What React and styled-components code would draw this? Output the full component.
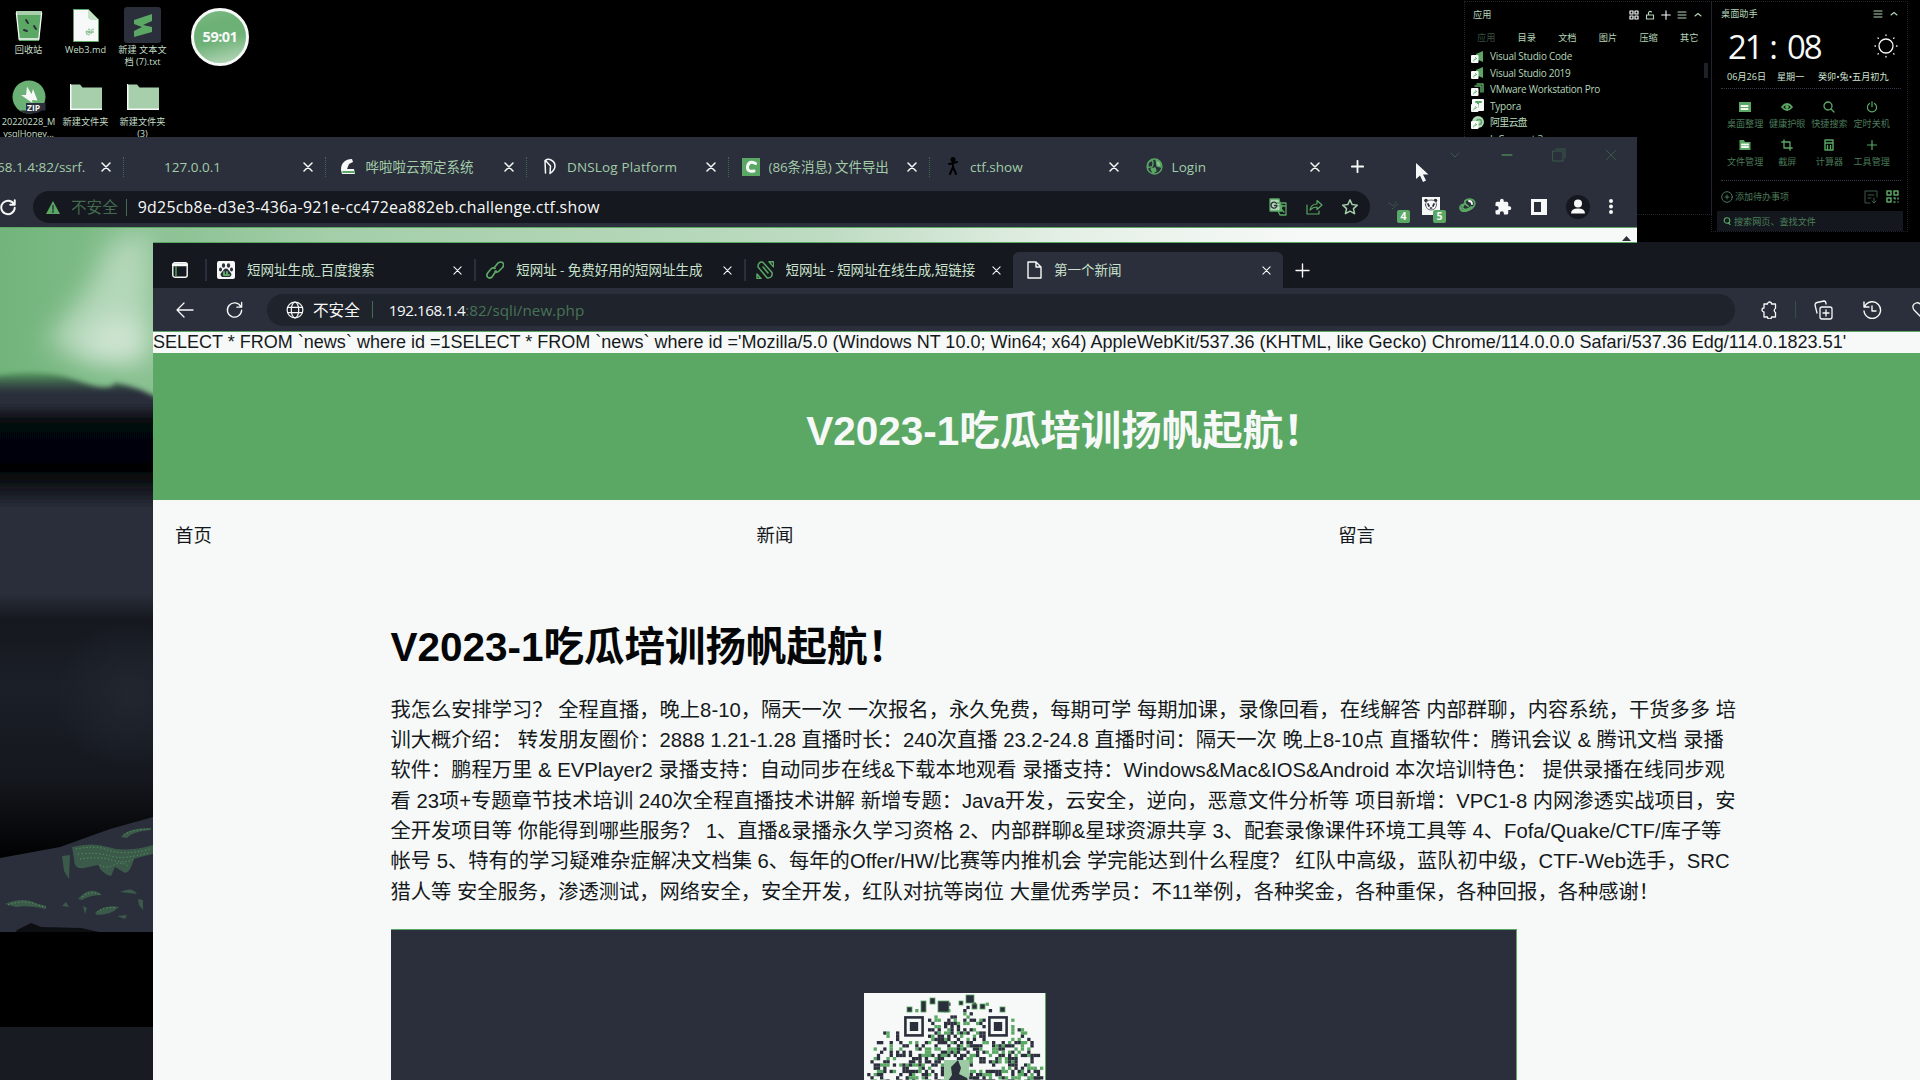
import React from "react";
import styled, { createGlobalStyle } from "styled-components";

const C = {
  ink: "#2a2f3b",
  deep: "#15181e",
  field: "#1f232c",
  green: "#5aa864",
  white: "#f7f9f8",
  mint: "#b4d6b9",
  dim: "#4a7a58",
};
const ui = `"Open Sans", "Noto Sans CJK SC", sans-serif`;
const arial = `"Liberation Sans", "Noto Sans CJK SC", sans-serif`;

const Global = createGlobalStyle`
  *{box-sizing:border-box}
  html,body{margin:0;background:#000}
  body{width:1920px;height:1080px;overflow:hidden;font-family:${ui};color:${C.white}}
  svg{display:block;flex:none}
  h1,h2,p{margin:0}
`;

const Desktop = styled.main`position:relative;width:1920px;height:1080px;overflow:hidden;background:#000;`;

/* ---------- desktop icons ---------- */
const IconGrid = styled.section`
  position:absolute;left:0;top:6px;display:grid;
  grid-template-columns:57px 57px 57px;grid-template-rows:72px 66px;
`;
const Shortcut = styled.div`display:flex;flex-direction:column;align-items:center;`;
const ShortcutArt = styled.div`height:38px;display:flex;align-items:center;justify-content:center;`;
const ShortcutLabel = styled.span`
  font-size:9.2px;line-height:12.4px;text-align:center;white-space:pre;color:#c4dfc8;letter-spacing:${p => p.$ls || 0}px;
`;
const Timer = styled.div`
  position:absolute;left:191px;top:8px;width:58px;height:58px;border-radius:50%;
  border:3.5px solid ${C.white};display:flex;align-items:center;justify-content:center;
  background:linear-gradient(165deg,#7dbb85 0%,#6bb074 30%,#6fb278 55%,#a9d0ae 88%,#c6e0c9 100%);
  font:700 14.5px/14px ${ui};letter-spacing:-.5px;color:${C.white};
`;

/* ---------- widgets ---------- */
const Panel = styled.section`
  position:absolute;top:1px;left:${p => p.$x}px;width:${p => p.$w}px;height:${p => p.$h}px;
  border:1px dotted #20242d;display:flex;flex-direction:column;
`;
const PanelHead = styled.header`
  display:flex;align-items:center;justify-content:space-between;height:25px;padding:0 8px 0 ${p => p.$l}px;
  font-size:9.2px;line-height:12px;color:${C.mint};
`;
const HeadTools = styled.div`display:flex;gap:6px;`;
const Cats = styled.nav`
  display:grid;grid-template-columns:repeat(6,40.6px);padding-left:12px;height:22px;align-items:center;
  font-size:9.2px;line-height:12px;color:${C.mint};
`;
const Cat = styled.span`color:${p => (p.$dim ? "#35503f" : C.mint)};`;
const AppList = styled.div`display:flex;flex-direction:column;padding-left:6px;margin-top:-1px;`;
const AppRow = styled.div`
  display:flex;align-items:center;gap:6px;height:16.5px;font-size:10px;line-height:14px;color:${C.mint};
  letter-spacing:${p => p.$ls || 0}px;white-space:nowrap;
`;
const Scroll = styled.i`position:absolute;right:3px;top:61px;width:4px;height:15px;background:#1d2129;`;
const ClockRow = styled.div`display:flex;justify-content:space-between;align-items:center;height:46px;padding:0 9px 0 16px;margin-top:-4px;`;
const Clock = styled.div`display:grid;grid-template-columns:30px 29px 36px;font:400 33px/40px ${ui};letter-spacing:-2px;color:${C.white};padding-top:3px;
  span:nth-child(2){text-align:center}`;
const DateRow = styled.div`display:grid;grid-template-columns:50px 41px auto;height:17px;align-items:center;margin:0 0 2px 15px;font-size:9.1px;line-height:12px;color:#d0e4d2;white-space:nowrap;`;
const Rule = styled.i`display:block;height:0;border-top:1px dotted #343b47;margin:0 6px 0 9px;`;
const Tools = styled.div`display:grid;grid-template-columns:repeat(4,42.2px);grid-auto-rows:38px;padding:12px 0 0 12px;height:92px;`;
const Tool = styled.div`display:flex;flex-direction:column;align-items:center;gap:5px;font-size:9.1px;line-height:12px;color:${C.dim};white-space:nowrap;
  svg{color:${C.green}}`;
const Todo = styled.div`display:flex;align-items:center;height:31px;gap:2px;padding:0 8px 0 9px;font-size:9px;color:${C.dim};
  svg:nth-of-type(2){margin-left:auto;margin-right:6px}`;
const Search = styled.div`display:flex;align-items:center;height:20px;gap:3px;margin:-1px 4px 0 5px;padding-left:6px;background:#14171d;font-size:9.1px;color:#4b815a;`;

/* ---------- chrome window ---------- */
const ChromeWin = styled.section`
  position:absolute;left:0;top:137px;width:1637px;height:795px;background:${C.ink};display:flex;flex-direction:column;
`;
const ChromeTabs = styled.header`display:flex;height:54px;padding-bottom:1px;`;
const ChromeTab = styled.div`
  flex:none;width:${p => p.$w || 201.5}px;height:59px;display:flex;align-items:center;padding:0 12px 0 ${p => p.$l ?? 14}px;
  gap:10px;
`;
const TabLine = styled.i`width:0;height:20px;border-left:1px dotted ${p => (p.$on ? "#42694f" : "transparent")};margin-right:${p => p.$r}px;`;
const TabText = styled.span`
  flex:1;overflow:hidden;white-space:nowrap;font-size:13.5px;line-height:20px;color:#a3cca9;letter-spacing:${p => p.$ls || 0}px;
  text-indent:${p => p.$in || 0}px;
`;
const WinTools = styled.div`display:flex;gap:38px;height:36px;align-items:center;margin-left:76px;color:#3a5a48;`;
const ChromeBar = styled.div`display:flex;align-items:center;height:32px;`;
const ChromeOmni = styled.div`
  display:flex;align-items:center;width:1337px;height:32px;margin-left:16px;border-radius:16px;background:${C.deep};padding:0 11px 0 13px;
`;
const Unsafe = styled.span`font-size:15.6px;line-height:20px;color:${p => p.$c};white-space:nowrap;`;
const Sep = styled.i`width:1px;height:17px;background:${p => p.$c || "#426c50"};margin:0 ${p => p.$r}px 0 ${p => p.$l}px;`;
const Url = styled.span`flex:1;font-size:${p => p.$fs}px;line-height:20px;letter-spacing:${p => p.$ls}px;white-space:nowrap;color:${C.white};
  em{font-style:normal;color:#477355;letter-spacing:.05px}`;
const Row = styled.div`display:flex;align-items:center;gap:${p => p.$gap}px;margin-left:${p => p.$l || 0}px;`;
const Badged = styled.div`position:relative;width:18px;height:20px;`;
const Badge = styled.b`
  position:absolute;left:11px;top:13px;width:13px;height:13px;border-radius:2px;background:${C.green};
  font-size:10.5px;line-height:13px;text-align:center;color:${C.white};
`;
const ChromePage = styled.div`position:relative;flex:1;margin-top:4px;border-top:1px solid ${C.green};overflow:hidden;`;
const Taskbar = styled.footer`position:absolute;left:0;bottom:0;width:153px;height:53px;background:#181b22;`;

/* ---------- edge window ---------- */
const EdgeWin = styled.section`
  position:absolute;left:153px;top:242px;width:1767px;height:838px;display:flex;flex-direction:column;
  overflow:hidden;
`;
const EdgeTop = styled.div`height:1px;background:linear-gradient(90deg,${C.green} 1484px,${C.deep} 1484px);flex:none;`;
const Page = styled.div`flex:1;display:flex;flex-direction:column;background:${C.white};`;
const EdgeTabs = styled.header`display:flex;align-items:flex-end;flex:none;height:45px;background:${C.deep};`;
const EdgeSide = styled.div`width:52px;height:36px;display:flex;align-items:center;padding-left:19px;`;
const EdgeTab = styled.div`
  flex:none;width:${p => p.$w || 269.3}px;height:36px;display:flex;align-items:center;gap:12px;padding:0 12px 0 ${p => (p.$on ? 14 : 13)}px;
  border-radius:${p => (p.$on ? "6px 6px 0 0" : "0")};background:${p => (p.$on ? C.ink : "transparent")};
`;
const EdgeLine = styled.i`width:2px;height:22px;background:${C.ink};margin-left:-13px;margin-right:-2px;`;
const EdgeText = styled(TabText)`color:#c9e0cc;`;
const NewTab = styled.div`height:36px;display:flex;align-items:center;padding-left:12px;`;
const EdgeBar = styled.div`display:flex;align-items:center;flex:none;height:43px;background:${C.ink};padding-left:23px;`;
const EdgeOmni = styled.div`
  display:flex;align-items:center;flex:none;width:1468px;height:32px;border-radius:16px;background:${C.field};margin-left:23px;padding-left:19px;
`;
const Query = styled.div`flex:none;height:22px;border-top:1px solid ${C.green};font:18.02px/20px ${arial};color:#15191c;white-space:nowrap;`;
const Banner = styled.div`
  flex:none;height:147px;background:${C.green};display:flex;align-items:center;justify-content:center;padding:8px 0 0 57px;
`;
const Title = styled.h1`font:700 40.5px/60px ${arial};color:${p => p.$c};white-space:nowrap;`;
const Nav = styled.nav`display:grid;flex:none;grid-template-columns:repeat(3,581.6px);padding-left:22px;height:71px;align-items:center;font:18.4px/24px ${arial};color:#14181a;`;
const Article = styled.article`margin:46px 0 0 237.5px;display:flex;flex-direction:column;`;
const Body = styled.p`margin-top:17.6px;font:20.27px/30.36px ${arial};color:#15191c;`;
const Line = styled.span`display:block;white-space:pre;`;
const Hero = styled.div`margin-top:21.4px;width:1126px;height:200px;background:${C.ink};border:solid ${C.green};border-width:1px 1px 0 0;display:flex;justify-content:center;padding:63px 0 0 3px;`;

/* ---------- small drawings ---------- */
const S = ({ s = 16, w, h, v = "0 0 24 24", c = "currentColor", sw = 2, f = "none", children }) => (
  <svg width={w || s} height={h || s} viewBox={v} fill={f} stroke={c} strokeWidth={sw} strokeLinecap="round" strokeLinejoin="round">{children}</svg>
);
const X = ({ s = 10, sw = 1.5 }) => <S s={s} v="0 0 10 10" c={C.white} sw={sw}><path d="M1 1l8 8M9 1l-8 8" /></S>;
const Plus = ({ s = 12, c = C.white, sw = 1.7 }) => <S s={s} v="0 0 12 12" c={c} sw={sw}><path d="M6 .8v10.4M.8 6h10.4" /></S>;
const Menu = () => <S s={10} v="0 0 10 10" c={C.mint} sw={1}><path d="M1 2h8M1 5h8M1 8h8" /></S>;
const Caret = () => <S s={10} v="0 0 10 10" c={C.mint} sw={1.1}><path d="M2 6l3-2.5L8 6" /></S>;

const Bin = () => (
  <S w={28} h={33} v="0 0 28 33" c="none">
    <path d="M1 2h26l-3 30H4z" fill={C.green} /><path d="M1 2h26l-.4 4H1.4z" fill="#a9d0ae" />
    <path d="M1.4 4l2.8 26M26.6 4l-2.8 26M4 30h20" stroke={C.white} strokeWidth="1.3" />
    <path d="M11 11l2 3M19 17l2 3M9 21l3 1" stroke={C.ink} strokeWidth="2" />
  </S>
);
const Md = () => (
  <S w={26} h={33} v="0 0 26 33" c={C.green} sw={1}>
    <path d="M.5.5h15l10 10v22H.5z" fill={C.white} /><path d="M15 1v8l3 2h7L15.500 1z" fill="#c6e0c9" stroke="none" />
    <path d="M14 22v4M16 20v6M18 21v4M20 20v5M13 23h7" strokeDasharray="1 1.500" />
  </S>
);
const Sublime = () => (
  <S w={37} h={36} v="0 0 37 36" c="none"><rect width="37" height="36" rx="3" fill={C.ink} />
    <path d="M10 13l18-6v7l-9 4 9 2v5l-18 5v-6l8-4-8-3z" fill={C.green} /></S>
);
const Zip = () => (
  <S w={34} h={34} v="0 0 34 34" c="none"><circle cx="17" cy="17" r="16.500" fill="#6bb074" />
    <path d="M15 6.500l4.500 7.500L21 9l4.500 11.500L20 20l.5 3L9 15l5 0z" fill={C.white} />
    <path d="M14 23h19.500v7.500H30Q25 34 17 33.500 10 33 8 30.500h6z" fill={C.ink} />
    <text x="15" y="30.800" fontSize="8.500" fontWeight="700" fill={C.white} fontFamily="Open Sans">ZIP</text></S>
);
const Folder = () => <S w={32} h={26} v="0 0 32 26" c="none"><path d="M.5 2q0-1.500 1.500-1.500h8l2.500 3H32V26H.5z" fill="#a7cfac" /><path d="M.5 1v24.500h31" stroke={C.white} /></S>;
const Puzzle = () => (
  <S s={18} c="none" f={C.white}>
    <path d="M20.500 11H19V7a2 2 0 0 0-2-2h-4V3.500a2.500 2.500 0 0 0-5 0V5H4a2 2 0 0 0-2 2v3.800h1.500a2.700 2.700 0 0 1 0 5.400H2V20a2 2 0 0 0 2 2h3.800v-1.500a2.700 2.700 0 0 1 5.400 0V22H17a2 2 0 0 0 2-2v-4h1.500a2.500 2.500 0 0 0 0-5z" />
  </S>
);
const PuzzleLine = () => (
  <S s={18} v="0 0 18 18" c={C.white} sw={1.3}>
    <path d="M4 3h3.500a2 2 0 0 1 4 0H15.500v4.500a2.200 2.200 0 0 0 0 4V16h-4a2 2 0 0 1-4 0H4v-5a2 2 0 0 1 0-4z" />
  </S>
);
const Reload = ({ s = 18, sw = 2.2 }) => <S s={s} c={C.white} sw={sw}><path d="M20 8.500A9 9 0 1 0 21 13M21 3v6h-6" /></S>;
const Earth = () => <S s={18} c={C.white} sw={1.6}><circle cx="12" cy="12" r="10.500" /><ellipse cx="12" cy="12" rx="5" ry="10.500" /><path d="M2.500 8.500h19M2.500 15.500h19" /></S>;

const favicons = {
  car: <S w={18} h={17} v="0 0 18 17" c="none"><path d="M2 12C2 5 6 1 13 1l1 3-4 2-2 5h7l1 5H3z" fill={C.white} /><path d="M4 14h11" stroke={C.green} /></S>,
  dns: <S w={12} h={17} v="0 0 12 17" c={C.white} sw={1.5}><path d="M1.500 15L1 2.500Q4 .5 7 2q4 2 4 6t-5 7.500L6.500 8 2 3" /></S>,
  csdn: <S w={18} h={18} v="0 0 18 18" c="none"><rect width="18" height="18" fill={C.green} /><path d="M13.500 5.500Q7 2 5.500 8.500q-.5 6 6.500 4.500" stroke={C.white} strokeWidth="3" /></S>,
  man: <S w={14} h={19} v="0 0 14 19" c="#000" sw={2}><path d="M7 2v8M3 7l8-2M7 10l-3 7M7 10l3 7" /><circle cx="7" cy="2.500" r="1.500" /></S>,
  ball: <S s={17} v="0 0 17 17" c={C.green} sw={1.3}><circle cx="8.500" cy="8.500" r="7.500" /><path d="M2 5q5-5 5 0t-3 4l-2 1z" fill={C.ink} /><path d="M10 2l4 2 1 5-4-1z" fill="#8fc496" /><path d="M5 11l4-1 1 3-3 2z" fill={C.green} /></S>,
};
const chromeTabs = [
  ["none", "127.0.0.1", 0], ["car", "哗啦啦云预定系统", 0], ["dns", "DNSLog Platform", .15],
  ["csdn", "(86条消息) 文件导出", -.1], ["man", "ctf.show", 0], ["ball", "Login", .1],
];
const edgeIcons = {
  baidu: <S s={18} v="0 0 18 18" c="none"><rect width="18" height="18" rx="2" fill={C.white} /><g fill={C.ink}><ellipse cx="6.500" cy="4.500" rx="1.600" ry="2.200" /><ellipse cx="11.500" cy="4.500" rx="1.600" ry="2.200" /><ellipse cx="3.500" cy="8.500" rx="1.500" ry="2" /><ellipse cx="14.500" cy="8.500" rx="1.500" ry="2" /><path d="M9 7.500c2 0 2.500 2 4.500 4s.5 4.500-1.500 4.500H6c-2 0-3.500-2.500-1.500-4.500S7 7.500 9 7.500z" /></g><path d="M7 11v3h1.500M10 11v3h2" stroke={C.green} /></S>,
  link: <S s={18} v="0 0 18 18" c={C.green} sw={1.7}><path d="M8 7l4-5q3-2 5 0 1.500 2-.5 4.500L13 10q-2 2-4 .5M10 10l-4 6q-2.500 2-4.500 0-1.500-2 .5-4.500L5 8q2-2 4-.5" /></S>,
  url: <S s={18} v="0 0 18 18" c={C.green} sw={1.5}><path d="M2 6q0-5 4-5 1 0 2 1.500l8 9q1 5-4 5.500-1 0-2-1.500zM7 6l5 6M1 13l4 4.500H1zM13 .8h4.500v5z" /></S>,
};
const edgeTabs = [
  ["baidu", "短网址生成_百度搜索", 0], ["link", "短网址 - 免费好用的短网址生成", -.05], ["url", "短网址 - 短网址在线生成,短链接", -.05],
];
const apps = [["Visual Studio Code", -.25], ["Visual Studio 2019", -.27], ["VMware Workstation Pro", -.27], ["Typora", -.2], ["阿里云盘", -.8], ["L-Connect 3", -.2]];
const AppIcon = ({ i }) => (
  <S s={13} v="0 0 13 13" c="none">
    {i < 2 && <path d="M12 1v11L5 9V4z" fill={C.green} />}
    {i === 2 && <path d="M4 3h6v6M6 1h6v8" stroke={C.green} strokeWidth="1.500" />}
    {i === 3 && <><rect x="1" width="12" height="12" rx="1" fill={C.white} /><path d="M5 3h5M7 3v5" stroke={C.green} /></>}
    {i === 4 && <><circle cx="7" cy="6" r="6" fill={C.mint} /><circle cx="8" cy="6" r="2.500" stroke={C.green} strokeWidth="1.500" /></>}
    {i < 5 && <><rect y="5" width="7.500" height="8" rx="1" fill={C.white} /><path d="M2.500 11q0-2.500 3-2.500M4.500 7.500l1 1-1 1" stroke={C.green} strokeWidth=".8" /></>}
  </S>
);
const G = C.green;
const tools = [
  ["桌面整理", <S s={12} v="0 0 12 12" c="none"><rect y="1" width="12" height="10" fill={G} /><path d="M2.500 5h7M2.500 8h7" stroke={C.white} strokeDasharray="1 1.500" /></S>],
  ["健康护眼", <S s={12} v="0 0 12 12" c={G} sw={1.8}><path d="M1 6q5-6 10 0-5 6-10 0z" /><circle cx="6" cy="6" r="1" /></S>],
  ["快捷搜索", <S s={12} v="0 0 12 12" c={G} sw={1.3}><circle cx="5" cy="5" r="4" /><path d="M8 8l3 3" /></S>],
  ["定时关机", <S s={12} v="0 0 12 12" c={G} sw={1.2}><path d="M6 .8v5M3.500 2.500a4.600 4.600 0 1 0 5 0" /></S>],
  ["文件管理", <S s={12} v="0 0 12 12" c="none"><path d="M.5 1H5l1 2h5.500v8H.5z" fill={G} /><path d="M3 5.500h6M3 8h6" stroke={C.white} strokeDasharray="1 1.500" /></S>],
  ["截屏", <S s={12} v="0 0 12 12" c={G} sw={1.3}><path d="M3 .8V9h8.200M.8 3H9v8.200" /></S>],
  ["计算器", <S s={12} v="0 0 12 12" c={G} sw={1.4}><path d="M2 1h8v10H2zM2 4h8M4.500 6.500v3M7.500 6.500v3" /></S>],
  ["工具管理", <S s={12} v="0 0 12 12" c={G} sw={1.2}><path d="M6 1.500v9M1.500 6h9" /></S>],
];

const Wallpaper = () => (
  <svg width="1637" height="705" viewBox="0 227 1637 705">
    <defs>
      <linearGradient id="sky" x1="0" x2="1"><stop offset="0" stopColor="#72b47b" /><stop offset=".05" stopColor="#7cba85" /><stop offset=".1" stopColor="#8cc294" /><stop offset=".2" stopColor="#a3cea8" /><stop offset=".5" stopColor="#bddbc1" /><stop offset=".65" stopColor="#e4efe5" /><stop offset=".8" stopColor={C.white} /><stop offset="1" stopColor={C.white} /></linearGradient>
      <linearGradient id="hill" x1="0" x2="0" y1="370" y2="620" gradientUnits="userSpaceOnUse">
        <stop offset="0" stopColor={C.green} /><stop offset=".05" stopColor="#3a5549" /><stop offset=".085" stopColor={C.ink} /><stop offset=".13" stopColor={C.ink} /><stop offset=".21" stopColor="#060709" /><stop offset=".4" stopColor="#040506" /><stop offset=".47" stopColor="#14171d" /><stop offset=".55" stopColor={C.ink} /><stop offset="1" stopColor={C.ink} />
      </linearGradient>
      <linearGradient id="lake" x1="0" x2="0" y1="592" y2="860" gradientUnits="userSpaceOnUse">
        <stop offset="0" stopColor={C.ink} /><stop offset=".1" stopColor="#15181e" /><stop offset=".35" stopColor="#1b1f27" /><stop offset=".7" stopColor="#14171d" /><stop offset=".83" stopColor="#0b0d10" /><stop offset=".93" stopColor="#050608" /><stop offset="1" stopColor="#000" />
      </linearGradient>
      <radialGradient id="haze"><stop offset="0" stopColor="#21262f" /><stop offset="1" stopColor="#21262f" stopOpacity="0" /></radialGradient>
      <filter id="soft" x="-50%" y="-50%" width="200%" height="200%"><feGaussianBlur stdDeviation="13" /></filter>
      <filter id="edge" x="-10%" y="-10%" width="120%" height="120%"><feGaussianBlur stdDeviation="2.500" /></filter>
    </defs>
    <rect y="227" width="1637" height="200" fill="url(#sky)" />
    <path d="M45 343L90 285 112 240 150 230V340L136 362 90 360z" fill="#b4d7b9" filter="url(#soft)" />
    <path d="M75 345L118 312 145 335 138 358 90 354z" fill="#d0e5d3" filter="url(#soft)" />
    <path d="M-10 376Q40 366 75 379T115 382Q140 386 163 400V640H-10z" fill="url(#hill)" filter="url(#edge)" />
    <path d="M-5 592H170V932H-5z" fill="url(#lake)" />
    <ellipse cx="130" cy="695" rx="75" ry="75" fill="url(#haze)" />
    <path d="M0 857L60 846 110 828 153 816V932H0z" fill={C.ink} />
    <g fill="#3b5a4a">
      <path d="M72 846q20-5 36 0 18 6 45-2v9q-14 3-19 5-4 14-9 14l-10-6-4 9q-9-2-13-11l-14 3q-10 2-10-9zM121 836q6-9 30-9v2q-18 1-24 8zM62 855l8-1-1 24-5-8zM5 903q18-8 33 0l8 2v3q-18-4-30-2zM78 898q12-14 24-4-12 0-20 5zM95 912q10-9 24-6-8 8-22 8zM120 891q12-6 17 2M138 898l5 1v10l-4-5zM117 915l10-1-2 4zM62 905l4-4 3 5zM83 905l4 2-2 6zM20 861h8" />
    </g>
    <g stroke={C.green} strokeDasharray="1 2.500" fill="none">
      <path d="M76 848q20-4 32 1 18 6 42-1M78 853q20-2 32 2t38-3M80 858q18-3 32 1t22-1M100 864q6 4 14 0t14 1M124 834q8-6 27-6M8 904q16-6 30 0l8 2M82 896q10-8 19-1M97 911q8-6 20-4" />
    </g>
    <path d="M17 929l14-7 10 4 40 1 18 4v1H15z" fill="#0c0e12" />
    <path d="M1622 240h9l-4.500-5z" fill={C.ink} />
  </svg>
);

const Qr = () => {
  const cells = [];
  let seed = 7;
  const rnd = () => { seed = (seed * 16807) % 2147483647; return seed / 2147483647; };
  const m = 3.2;
  for (let r = 0; r < 28; r++) for (let c = 0; c < 57; c++) {
    const x = c * m, y = r * m, v = rnd(), t = rnd();
    const d = Math.hypot(x - 90, y - 90);
    const finder = y > 19 && y < 46 && ((x > 35 && x < 62) || (x > 119 && x < 146));
    const margin = y < 23 && x > 36 && x < 146;
    if (d > 88 || finder) continue;
    if (v < (margin ? .12 : d > 80 ? .36 : .55)) cells.push(<rect key={r + "-" + c} x={x} y={y} width={m + .1} height={m + .1} fill={t < .4 ? C.green : C.ink} />);
  }
  const finder = x => (<g key={x}><rect x={x + 1.400} y="24.400" width="17.200" height="18" fill={C.white} stroke={C.ink} strokeWidth="2.600" /><rect x={x + 5.800} y="29" width="8.400" height="9" fill={C.ink} /></g>);
  return (
    <svg width="182" height="137" viewBox="0 0 182 137">
      <rect width="182" height="137" fill={C.white} />
      {cells}
      <g fill={C.ink} stroke={C.green} strokeWidth=".8">
        <rect x="74" y="8" width="11" height="11" /><rect x="102" y="2" width="8" height="8" /><rect x="57" y="8" width="5" height="11" />
        <rect x="43" y="14" width="5" height="5" /><rect x="66" y="5" width="5" height="6" /><rect x="108" y="11" width="5" height="5" /><rect x="116" y="11" width="5" height="5" /><rect x="136" y="14" width="5" height="5" /><rect x="95" y="8" width="4" height="4" />
      </g>
      {finder(40)}{finder(124)}
      <rect x="80" y="67" width="25" height="24" fill="#9ccaa2" /><path d="M82 91l6-9-1-8 7-7 3 8-2 6 8 4 2 6z" fill={C.ink} />
      <path d="M181.500 0v137" stroke={C.green} />
    </svg>
  );
};

const lines = [
  "我怎么安排学习？ 全程直播，晚上8-10，隔天一次 一次报名，永久免费，每期可学 每期加课，录像回看，在线解答 内部群聊，内容系统，干货多多 培",
  "训大概介绍： 转发朋友圈价：2888 1.21-1.28 直播时长：240次直播 23.2-24.8 直播时间：隔天一次 晚上8-10点 直播软件：腾讯会议 & 腾讯文档 录播",
  "软件：鹏程万里 & EVPlayer2 录播支持：自动同步在线&下载本地观看 录播支持：Windows&Mac&IOS&Android 本次培训特色： 提供录播在线同步观",
  "看 23项+专题章节技术培训 240次全程直播技术讲解 新增专题：Java开发，云安全，逆向，恶意文件分析等 项目新增：VPC1-8 内网渗透实战项目，安",
  "全开发项目等 你能得到哪些服务？ 1、直播&录播永久学习资格 2、内部群聊&星球资源共享 3、配套录像课件环境工具等 4、Fofa/Quake/CTF/库子等",
  "帐号 5、特有的学习疑难杂症解决文档集 6、每年的Offer/HW/比赛等内推机会 学完能达到什么程度？ 红队中高级，蓝队初中级，CTF-Web选手，SRC",
  "猎人等 安全服务，渗透测试，网络安全，安全开发，红队对抗等岗位 大量优秀学员：不11举例，各种奖金，各种重保，各种回报，各种感谢！",
];

const Cursor = styled.div`position:absolute;left:1415px;top:162px;`;
const Gap = styled.i`width:${p => p.$w}px;flex:none;`;
const IconBox = styled.div`width:17px;display:flex;justify-content:center;margin-right:-1px;`;
const ReloadBox = styled.div`width:17px;display:flex;justify-content:flex-end;`;

export default function App() {
  return (
    <Desktop>
      <Global />
      <IconGrid>
        {[[<Bin />, "回收站"], [<Md />, "Web3.md"], [<Sublime />, "新建 文本文\n档 (7).txt"], [<Zip />, "20220228_M\nysqlHoney...", -.1], [<Folder />, "新建文件夹"], [<Folder />, "新建文件夹\n(3)"]].map(([a, t, ls], i) => (
          <Shortcut key={i}><ShortcutArt>{a}</ShortcutArt><ShortcutLabel $ls={ls}>{t}</ShortcutLabel></Shortcut>
        ))}
      </IconGrid>
      <Timer>59:01</Timer>

      <Panel $x={1464} $w={248} $h={214}>
        <PanelHead $l={8}>应用
          <HeadTools>
            <S s={10} v="0 0 10 10" c={C.white} sw={1.2}><path d="M1 1h3v3H1zM6 1h3v3H6zM1 6h3v3H1zM6 6h3v3H6z" /></S>
            <S s={10} v="0 0 10 10" c={C.mint} sw={1.1}><path d="M1.500 5h7v4h-7zM3.500 5V2.500Q5 .5 6.500 2" /></S>
            <Plus s={10} sw={1.3} /><Menu /><Caret />
          </HeadTools>
        </PanelHead>
        <Cats>{["应用", "目录", "文档", "图片", "压缩", "其它"].map((t, i) => <Cat key={t} $dim={i === 0}>{t}</Cat>)}</Cats>
        <AppList>{apps.map(([t, ls], i) => <AppRow key={t} $ls={ls}>{i < 5 ? <AppIcon i={i} /> : <Gap $w={13} />}{t}</AppRow>)}</AppList>
        <Scroll />
      </Panel>

      <Panel $x={1711} $w={197} $h={231}>
        <PanelHead $l={9}>桌面助手<HeadTools><Menu /><Caret /></HeadTools></PanelHead>
        <ClockRow>
          <Clock><span>21</span><span>:</span><span>08</span></Clock>
          <S s={24} v="0 0 24 24" c={C.white} sw={1.3}><circle cx="12" cy="12" r="7" /><path d="M12 1v.5M12 22.500v.5M1 12h.5M22.500 12h.5M4 4l.4.4M20 4l-.4.4M4 20l.4-.4M20 20l-.4-.4" /></S>
        </ClockRow>
        <DateRow><span>06月26日</span><span>星期一</span><span>癸卯•兔•五月初九</span></DateRow>
        <Rule />
        <Tools>{tools.map(([t, ic]) => <Tool key={t}>{ic}{t}</Tool>)}</Tools>
        <Rule />
        <Todo>
          <S s={12} v="0 0 12 12" c={C.dim} sw={1}><circle cx="6" cy="6" r="5.300" /><path d="M6 4v4M4 6h4" /></S>添加待办事项
          <S s={14} v="0 0 14 14" c="#3b5a49" sw={1}><path d="M6 13H1V1h12v6M4 5h6M4 8h3M10 8v5M8 11l2 2 2-2" /></S>
          <S s={13} v="0 0 13 13" c={G} sw={1.5}><path d="M1 1h4v4H1zM8 1h4v4H8zM1 8h4v4H1zM8 8h1v1M12 8v1M8 12h1M12 12h0" /></S>
        </Todo>
        <Search><S s={8} v="0 0 8 8" c={G} sw={1.1}><circle cx="4" cy="3.500" r="2.800" /><path d="M5.500 6l1.500 1.500" /></S>搜索网页、查找文件</Search>
      </Panel>

      <ChromeWin>
        <ChromeTabs>
          <ChromeTab $w={123} $l={0}><TabText $ls={0} $in={-3}>68.1.4:82/ssrf.</TabText><X /></ChromeTab>
          {chromeTabs.map(([ic, t, ls], i) => (
            <ChromeTab key={t} $l={0}>
              <TabLine $on={i < 5} $r={ic === "none" ? 30 : 4} />
              {ic !== "none" && <IconBox>{favicons[ic]}</IconBox>}
              <TabText $ls={ls}>{t}</TabText><X />
            </ChromeTab>
          ))}
          <ChromeTab $w={40} $l={19}><Plus s={13} /></ChromeTab>
          <WinTools>
            <S s={14} v="0 0 14 14" sw={1}><path d="M3 5l4 4 4-4" /></S>
            <S s={14} v="0 0 14 14" sw={1} c={C.green}><path d="M2 7h10" /></S>
            <S s={14} v="0 0 14 14" sw={1}><path d="M1 3h10v10H1zM4 1h9v9" /></S>
            <S s={14} v="0 0 14 14" sw={1}><path d="M2 2l10 10M12 2L2 12" /></S>
          </WinTools>
        </ChromeTabs>
        <ChromeBar>
          <ReloadBox><Reload s={18} sw={2.6} /></ReloadBox>
          <ChromeOmni>
            <S w={14} h={13} v="0 0 14 13" c="none"><path d="M7 0l7 13H0z" fill={C.green} /><path d="M7 4.500v4M7 10v1.200" stroke={C.ink} strokeWidth="1.400" /></S>
            <Gap $w={11} /><Unsafe $c="#43694e">不安全</Unsafe><Sep $l={8} $r={11} />
            <Url $fs={15.9} $ls={.24}>9d25cb8e-d3e3-436a-921e-cc472ea882eb.challenge.ctf.show</Url>
            <Row $gap={18}>
              <S s={18} v="0 0 18 18" c={C.green} sw={1.3}><path d="M1 1h9l3 12H1z" fill={C.mint} /><path d="M8 5h9v12h-6l-2-4M10 8h6M13 7q0 4-3 6M11 10l4 4" /><path d="M7.500 5.500a3 3 0 1 0 .5 2H5.500" stroke={C.ink} /></S>
              <S s={18} v="0 0 18 18" c={C.green} sw={1.2}><path d="M2 7v9h12v-3M5 12q1-6 7-6V2.500L17 7l-5 4.500V9q-4 0-7 3z" /></S>
              <S s={18} c="#a5ceaa" sw={2}><path d="M12 2.500l2.900 6.300 6.800.7-5.100 4.600 1.500 6.800L12 17.400l-6.100 3.500 1.500-6.800L2.300 9.500l6.800-.7z" /></S>
            </Row>
          </ChromeOmni>
          <Row $gap={18} $l={16}>
            <Badged><S s={18} v="0 0 18 18" c="#3f6b4d" sw={1}><path d="M3 6l4 3 4-5M6 12l6-5" strokeDasharray="1 2" /></S><Badge>4</Badge></Badged>
            <Badged><S s={18} v="0 0 18 18" c="none"><rect width="18" height="18" fill={C.white} /><circle cx="4" cy="3.500" r="1.800" fill={C.ink} /><circle cx="13.500" cy="3.500" r="1.800" fill={C.ink} /><path d="M3.500 8q0-5 5.500-5t5.500 5q-1 5-5.500 5T3.500 8z" fill={C.white} stroke={C.ink} strokeWidth=".7" /><path d="M6 7l1 2M12 7l-1 2M8.500 11h1" stroke={C.ink} strokeWidth="1.700" /></S><Badge>5</Badge></Badged>
            <S s={18} v="0 0 18 18" c={C.green} sw={1.8}><path d="M10 8Q6 6 7 3q3-3 8-1 3 2 1 6-3 4-8 5-5 1-6-3 0-3 4-4l-2 4q4 4 9-1" /><path d="M11 3q3 0 3 3" stroke={C.white} /></S>
            <Puzzle />
            <S s={18} v="0 0 18 18" c="none"><path d="M1 1h16v16H1z" fill={C.white} /><path d="M4 4h7v10H4z" fill={C.ink} /></S>
            <S s={24} v="0 0 24 24" c="none"><circle cx="12" cy="12" r="12" fill={C.deep} /><circle cx="12" cy="8.500" r="4" fill={C.white} /><path d="M5 18.500q0-5 7-5t7 5z" fill={C.white} /></S>
            <S w={6} h={18} v="0 0 6 18" c="none"><g fill={C.white}><circle cx="3" cy="3" r="2" /><circle cx="3" cy="8.500" r="2" /><circle cx="3" cy="14" r="2" /></g></S>
          </Row>
        </ChromeBar>
        <ChromePage><Wallpaper /></ChromePage>
      </ChromeWin>
      <Taskbar />
      <Cursor><S w={14} h={22} v="0 0 14 22" c="none"><path d="M1 1v16l4-3.500 3 6.500 3-1.500-3-6h5.500z" fill={C.white} /></S></Cursor>

      <EdgeWin>
        <EdgeTop />
        <EdgeTabs>
          <EdgeSide><S s={16} v="0 0 16 16" c={C.white} sw={1.4}><rect x=".8" y=".8" width="14.400" height="14.400" rx="2" /><path d="M1.500 2.800h13" strokeWidth="3" /><path d="M4 4.500v10" stroke={C.green} /></S></EdgeSide>
          {edgeTabs.map(([ic, t, ls]) => (
            <EdgeTab key={t}><EdgeLine />{edgeIcons[ic]}<EdgeText $ls={ls}>{t}</EdgeText><X s={9} sw={1.2} /></EdgeTab>
          ))}
          <EdgeTab $on $w={270}>
            <S w={15} h={18} v="0 0 15 18" c={C.white} sw={1.4}><path d="M1 1h8l5 5v11H1zM9 1v5h5" /></S>
            <EdgeText $ls={0}>第一个新闻</EdgeText><X s={9} sw={1.2} />
          </EdgeTab>
          <NewTab><Plus s={15} sw={1.1} /></NewTab>
        </EdgeTabs>
        <EdgeBar>
          <S w={18} h={16} v="0 0 18 16" c={C.white} sw={1.3}><path d="M17 8H1M8 1L1 8l7 7" /></S>
          <Gap $w={31} /><Reload s={19} sw={1.7} />
          <EdgeOmni>
            <Earth /><Gap $w={9} /><Unsafe $c={C.white}>不安全</Unsafe><Sep $l={12} $r={16} />
            <Url $fs={15.2} $ls={-.45}>192.168.1.4<em>:82/sqli/new.php</em></Url>
          </EdgeOmni>
          <Row $gap={0} $l={25}>
            <PuzzleLine /><Sep $c="#35503f" $l={17} $r={17} />
            <S s={20} v="0 0 20 20" c={C.white} sw={1.3}><rect x="7" y="7" width="12" height="12" rx="2" /><path d="M13 10v6M10 13h6M4 13L2 5q0-2 2-2.500l7-1.500q2 0 2 3" /></S>
            <Gap $w={29} />
            <S s={20} v="0 0 20 20" c={C.white} sw={1.4}><path d="M3 6a8.300 8.300 0 1 1-1 5M2 2v5h5M10 6v5h4" /></S>
            <Gap $w={29} />
            <S s={20} v="0 0 20 20" c={C.white} sw={1.3}><path d="M10 17L3 10q-3-5 2-7 3-1 5 2 2-3 5-2 5 2 2 7z" /></S>
          </Row>
        </EdgeBar>
        <Page>
          <Query>{"SELECT * FROM `news` where id =1SELECT * FROM `news` where id ='Mozilla/5.0 (Windows NT 10.0; Win64; x64) AppleWebKit/537.36 (KHTML, like Gecko) Chrome/114.0.0.0 Safari/537.36 Edg/114.0.1823.51'"}</Query>
          <Banner><Title $c={C.white}>V2023-1吃瓜培训扬帆起航！</Title></Banner>
          <Nav><span>首页</span><span>新闻</span><span>留言</span></Nav>
          <Article>
            <Title as="h2" $c="#050607">V2023-1吃瓜培训扬帆起航！</Title>
            <Body>{lines.map((t, i) => <Line key={i}>{t}</Line>)}</Body>
            <Hero><Qr /></Hero>
          </Article>
        </Page>
      </EdgeWin>
    </Desktop>
  );
}
